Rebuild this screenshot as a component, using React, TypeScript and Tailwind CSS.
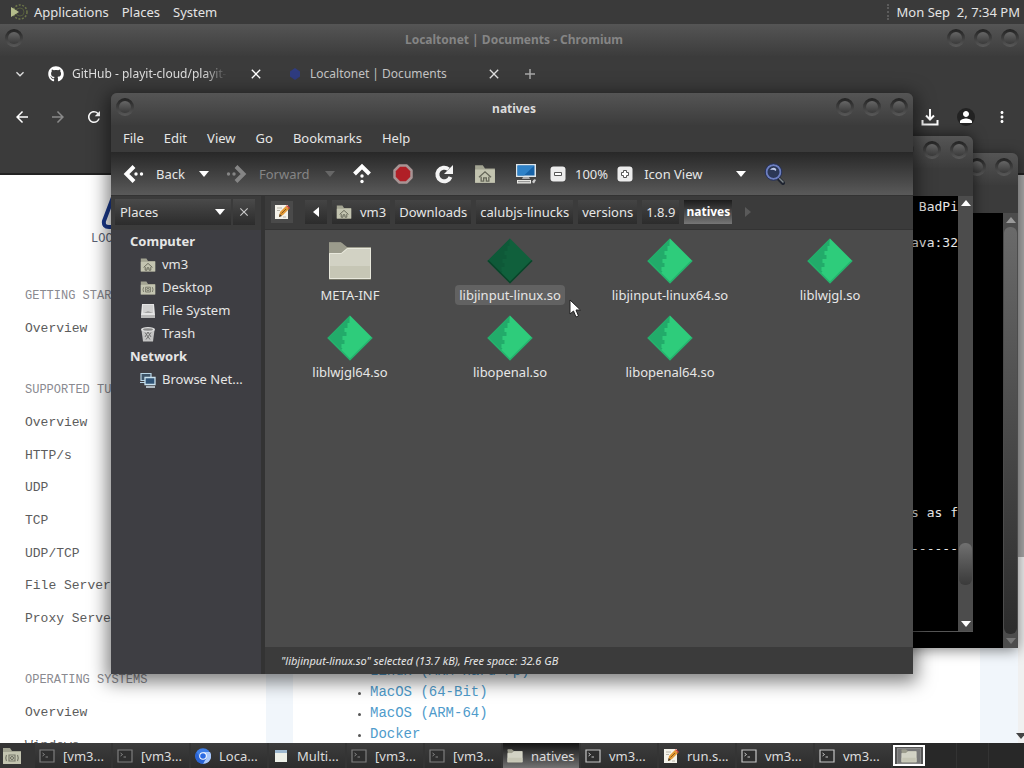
import { ReactNode } from "react";
import { clsx } from "clsx";
import { FaGithub } from "react-icons/fa";
import {
  MdArrowBack,
  MdArrowForward,
  MdClose,
  MdKeyboardArrowDown,
  MdMoreVert,
  MdPerson,
  MdRefresh,
} from "react-icons/md";

const Caret = ({ className }: { className?: string }) => (
  <svg viewBox="0 0 10 6" className={clsx("w-2.5 h-1.5 shrink-0", className)}>
    <path d="M0 0h10L5 6z" fill="currentColor" />
  </svg>
);

const HomeFolder = ({ className }: { className?: string }) => (
  <svg viewBox="0 0 20 20" className={clsx("shrink-0", className)}>
    <path d="M1 2h7l2 3h9v13H1z" fill="#a3a492" />
    <path d="M1 6h18v12H1z" fill="#c3c4b0" />
    <path
      d="M4.500 13l5.500-5 5.500 5M6.500 12.500v4h2.300v-3h2.400v3h2.300v-4"
      fill="none"
      stroke="#66675a"
      strokeWidth="1.200"
    />
  </svg>
);

const DesktopFolder = ({ className }: { className?: string }) => (
  <svg viewBox="0 0 20 20" className={clsx("shrink-0", className)}>
    <path d="M1 2h7l2 3h9v13H1z" fill="#a3a492" />
    <path d="M1 6h18v12H1z" fill="#c3c4b0" />
    <path
      d="M7 9h6v6H7zM4.500 9q-1.500 3 0 6M15.500 9q1.500 3 0 6"
      fill="none"
      stroke="#77786a"
      strokeWidth="1.200"
    />
    <circle cx="10" cy="12" r="1.500" fill="none" stroke="#66675a" />
  </svg>
);

const Drive = () => (
  <svg viewBox="0 0 16 16" className="size-4">
    <path d="M2 1h12l1 11v3H1v-3z" fill="#e4e4e4" />
    <path d="M3 2h10v8H3z" fill="#d0d0d0" />
    <path d="M4 10l4-2 5 2z" fill="#a5a5a5" />
    <path d="M1 12h14v3H1z" fill="#b9b9b9" />
  </svg>
);

const TrashCan = () => (
  <svg viewBox="0 0 16 16" className="size-4">
    <path d="M1.500 4h13l-1.500 11.500H3z" fill="#c4c4c4" />
    <path
      d="M5 6.500l5 7M8 6l3 5M11 6.500l-5 7M8 6l-3 5"
      stroke="#6a6a6a"
      strokeWidth=".9"
    />
    <ellipse cx="8" cy="3.500" rx="7" ry="2.500" fill="#dcdcdc" />
    <ellipse cx="8" cy="3.500" rx="5" ry="1.200" fill="#8b8b8b" />
  </svg>
);

const Network = () => (
  <svg viewBox="0 0 16 16" className="size-4">
    <path
      d="M1 1.500h10v7H1zM0 10.500h5"
      fill="#3d5468"
      stroke="#b8d4e4"
      strokeWidth="1.200"
    />
    <path d="M5 5.500h10v7H5z" fill="#2f5376" stroke="#c9e2ef" strokeWidth="1.300" />
    <path d="M6 15h9" stroke="#d4e3eb" strokeWidth="1.500" />
  </svg>
);

const Note = ({ className }: { className?: string }) => (
  <svg viewBox="0 0 16 16" className={clsx("shrink-0", className)}>
    <path d="M1 1h13v14H1z" fill="#f4f2ea" />
    <path d="M3 4h5M3 6.500h3M9 13h3" stroke="#b8b4a8" />
    <path d="M5 13l1-5 6-6 3 3-6 6z" fill="#e39a36" />
    <path d="M12 2l1-1 3 3-1 1z" fill="#d3463e" />
    <path d="M5 13l.7-3L8 12z" fill="#4a3b28" />
    <path d="M7.500 9.500l4.500-4.500" stroke="#8a5a1c" />
  </svg>
);

const Folder = ({ className }: { className?: string }) => (
  <svg viewBox="0 0 44 40" className={clsx("shrink-0", className)}>
    <path d="M1 1h12l4 5H1z" fill="#8f8f82" />
    <path d="M1 2h13l5 4h24v31H1z" fill="#9b9b8c" />
    <path d="M1 12h12l6-5h24v31H1z" fill="#d2d2c4" />
    <path d="M1 25h42v13H1z" fill="#c6c6b5" />
    <path d="M1.500 12.500h12l6-5h23v30h-41z" fill="none" stroke="#e8e8dc" />
    <path d="M1 38.500h42" stroke="#77776a" />
  </svg>
);

const Library = ({ dark }: { dark?: boolean }) => (
  <svg viewBox="0 0 48 48" className="size-12">
    <path
      d="M24 1.500L46.500 24 24 46.500 1.500 24z"
      fill={dark ? "#10603c" : "#2ecc7b"}
    />
    <path
      d="M24 1.500L1.500 24l13 13 2-3h-1v-4h3v-4h-2v-4h4v-4h-2v-4h3v-5h2V5z"
      fill={dark ? "#0e5938" : "#22ab6a"}
    />
    <path
      d="M24 46.500L46.500 24l-1-1L24 44.500 2.500 23l-1 1z"
      fill={dark ? "#0a4329" : "#25b26d"}
    />
  </svg>
);

const TerminalIcon = ({ dim }: { dim?: boolean }) => (
  <svg viewBox="0 0 16 14" className="w-4 h-3.5 shrink-0">
    <path
      d="M1 1h14v12H1z"
      fill="#2e2e2e"
      stroke={dim ? "#7e7e7e" : "#c4c4c4"}
      strokeWidth="1.200"
    />
    <path
      d="M3.500 4l2 1.500-2 1.500M6.500 8h2.500"
      fill="none"
      stroke={dim ? "#858585" : "#c4c4c4"}
    />
  </svg>
);

const ChromiumIcon = () => (
  <svg viewBox="0 0 16 16" className="size-4 shrink-0">
    <circle cx="8" cy="8" r="7.800" fill="#3f7fe8" />
    <path d="M8 4h7a7.800 7.800 0 0 1-7 11.800L11.500 10z" fill="#a9c8fb" />
    <path d="M1.500 4A7.800 7.800 0 0 0 8 15.800L11 10H5z" fill="#2a63d4" />
    <circle cx="8" cy="8" r="3.800" fill="#fff" />
    <circle cx="8" cy="8" r="2.800" fill="#2c6be2" />
  </svg>
);

const WindowIcon = () => (
  <svg viewBox="0 0 16 14" className="w-4 h-3.5 shrink-0">
    <path d="M2 1h12v12H2z" fill="#eef0e8" />
    <path d="M2 1h12v3H2z" fill="#9fb9d0" />
  </svg>
);

const RoundButton = ({ label }: { label: string }) => (
  <button
    aria-label={label}
    className="size-[18px] rounded-full bg-linear-to-b from-[#222] to-[#5a5a5a] flex items-center justify-center"
  >
    <span className="size-3 rounded-full bg-linear-to-b from-[#666] to-[#3a3a3a]" />
  </button>
);

const TitleBar = ({ title, dim }: { title?: string; dim?: boolean }) => (
  <div className="flex items-start justify-between h-8 px-[5px] pt-[5px] bg-linear-to-b from-[#555] to-[#3c3c3c] shrink-0">
    <RoundButton label="Window menu" />
    <h1
      className={clsx(
        "text-xs leading-[22px] font-bold pl-[58px]",
        dim ? "text-[#858585]" : "text-[#dcdcdc]"
      )}
    >
      {title}
    </h1>
    <div className="flex gap-[9px]">
      <RoundButton label="Minimize" />
      <RoundButton label="Maximize" />
      <RoundButton label="Close" />
    </div>
  </div>
);

const TopPanel = () => (
  <header className="h-6 shrink-0 flex items-center justify-between bg-[#3a3a3a] pl-2 pr-1 text-[#e4e4e4]">
    <nav className="flex items-center">
      <svg viewBox="0 0 20 20" className="size-5 mr-1.5">
        <circle
          cx="12"
          cy="10"
          r="7"
          fill="none"
          stroke="#6c7548"
          strokeWidth="1.500"
          strokeDasharray="2 1.500"
        />
        <circle cx="12" cy="10" r="4" fill="none" stroke="#545c3c" />
        <path d="M3 5l8 5-8 5z" fill="#b5bd8b" />
      </svg>
      <button className="mr-[13px]">Applications</button>
      <button className="mr-[13px]">Places</button>
      <button>System</button>
    </nav>
    <div className="flex items-center gap-2">
      <span className="h-4 border-l-2 border-dotted border-[#5c5c5c]" />
      <time className="whitespace-pre">Mon Sep  2, 7:34 PM</time>
    </div>
  </header>
);

const docSections = [
  { title: "GETTING STARTED", items: ["Overview"], height: "h-8" },
  {
    title: "SUPPORTED TUNNELS",
    items: [
      "Overview",
      "HTTP/s",
      "UDP",
      "TCP",
      "UDP/TCP",
      "File Server",
      "Proxy Server",
    ],
    height: "h-[228px]",
  },
  { title: "OPERATING SYSTEMS", items: ["Overview", "Windows"], height: "h-[65px]" },
];

const downloads = [
  "Linux (ARM Hard-Fp)",
  "MacOS (64-Bit)",
  "MacOS (ARM-64)",
  "Docker",
];

const Chromium = () => (
  <section className="absolute inset-0 flex flex-col bg-[#3b3b3b] overflow-hidden">
    <TitleBar title="Localtonet | Documents - Chromium" dim />
    <div className="flex items-center h-9 pl-3 shrink-0 text-xs text-[#dedede]">
      <button aria-label="Search tabs">
        <MdKeyboardArrowDown className="size-4" />
      </button>
      <a href="#github" className="flex items-center gap-2 w-[184px] ml-5">
        <FaGithub className="size-4 text-white shrink-0" />
        <span className="whitespace-nowrap overflow-hidden mask-r-from-85%">
          GitHub - playit-cloud/playit-
        </span>
      </a>
      <button aria-label="Close tab" className="ml-4">
        <MdClose className="size-4 text-white" />
      </button>
      <a href="#docs" className="flex items-center gap-2 w-[172px] ml-6 text-[#c4c4c4]">
        <svg viewBox="0 0 14 14" className="size-3.5">
          <path d="M7 1l5 3.500v5L7 13 2 9.500v-5z" fill="#2f3c80" />
        </svg>
        <span>Localtonet | Documents</span>
      </a>
      <button aria-label="Close tab" className="ml-[26px]">
        <MdClose className="size-4" />
      </button>
      <button aria-label="New tab" className="ml-5">
        <svg viewBox="0 0 16 16" className="size-4">
          <path d="M8 3v10M3 8h10" stroke="#a8a8a8" strokeWidth="1.500" />
        </svg>
      </button>
    </div>
    <div className="h-[83px] shrink-0 flex justify-between px-[13px] pt-4 border-b-2 border-[#222] text-white">
      <div className="flex gap-[18px] h-[18px]">
        <button aria-label="Back">
          <MdArrowBack className="size-[18px]" />
        </button>
        <button aria-label="Forward">
          <MdArrowForward className="size-[18px] text-[#8a8a8a]" />
        </button>
        <button aria-label="Reload">
          <MdRefresh className="size-[18px]" />
        </button>
      </div>
      <div className="flex gap-[18px] h-[18px]">
        <button aria-label="Downloads">
          <svg viewBox="0 0 18 18" className="size-[18px]">
            <path
              d="M9 1v10M5 7.500l4 4 4-4M1.500 12v4.500h15V12"
              fill="none"
              stroke="currentColor"
              strokeWidth="2"
            />
          </svg>
        </button>
        <button aria-label="Profile" className="bg-[#222] rounded-full">
          <MdPerson className="size-[18px]" />
        </button>
        <button aria-label="Menu">
          <MdMoreVert className="size-[18px]" />
        </button>
      </div>
    </div>

    <div className="flex-1 min-h-0 flex bg-white font-['Liberation_Mono',monospace] overflow-hidden">
      <nav className="w-[266px] shrink-0 pl-[25px] text-[13px] text-[#5c5c5c]">
        <div className="flex flex-col w-full h-[104px] pt-4 pl-[66px] text-xs text-[#5a5f73]">
          <svg viewBox="0 0 56 40" className="w-14 h-10 ml-2.5">
            <path
              d="M14 1L3 30q-1 6 5 6h40q6 0 4-6L42 1z"
              fill="none"
              stroke="#1b3a8f"
              strokeWidth="4"
            />
          </svg>
          LOCALTONET
        </div>
        {docSections.map((section) => (
          <div key={section.title} className="mb-7">
            <h2 className="text-xs leading-[34px] text-[#8a8a90]">{section.title}</h2>
            <ul className={clsx("flex flex-col", section.height)}>
              {section.items.map((item) => (
                <li key={item} className="flex-1 flex items-center">
                  <a href="#docs">{item}</a>
                </li>
              ))}
            </ul>
          </div>
        ))}
      </nav>
      <main className="flex-1 border-l-[27px] border-r-[38px] border-[#f1f6fb] pt-[486px] pl-[77px] text-sm leading-[21px] text-[#4f9bcb]">
        <ul className="list-disc marker:text-[#555] marker:text-[10px]">
          {downloads.map((item) => (
            <li key={item}>
              <a href="#download">{item}</a>
            </li>
          ))}
        </ul>
      </main>
      <div className="w-1.5 bg-[#f0f0f0] flex flex-col justify-between items-center pb-1">
        <span className="w-full h-[382px] bg-[#a8a8a8]" />
        <Caret className="text-[#444]" />
      </div>
    </div>
  </section>
);

const ScrollBar = ({ low }: { low?: boolean }) => (
  <div className="w-[15px] shrink-0 bg-[#4c4c4c] flex flex-col items-center py-1">
    <Caret className={clsx("rotate-180", low ? "text-white" : "text-[#9a9a9a]")} />
    <span
      className={clsx(
        "w-[13px] rounded-md bg-linear-to-b",
        low
          ? "mt-auto mb-9 h-[42px] from-[#707070] to-[#3a3a3a]"
          : "mt-1 flex-1 mb-1 from-[#6a6a6a] to-[#2c2c2c]"
      )}
    />
    <Caret className={low ? "text-white" : "text-[#777]"} />
  </div>
);

const BackTerminal = () => (
  <section className="absolute left-[300px] right-1.5 top-[129px] h-[495px] flex flex-col rounded-t-md overflow-hidden bg-[#3b3b3b] shadow-[0_2px_14px_rgba(0,0,0,0.5)]">
    <TitleBar />
    <div className="flex-1 mt-7 flex justify-end bg-black">
      <ScrollBar />
    </div>
  </section>
);

const FrontTerminal = () => (
  <section className="absolute left-[260px] right-[51px] top-28 h-[496px] flex flex-col rounded-t-md overflow-hidden bg-[#3b3b3b] border-b border-[#555] shadow-[0_0_14px_rgba(0,0,0,0.6)]">
    <TitleBar />
    <div className="flex-1 mt-7 flex bg-black text-[#e8e8e8] font-['DejaVu_Sans_Mono',monospace] text-[13px] leading-[18px]">
      <div className="flex-1 flex flex-col items-end pt-0.5 whitespace-pre">
        <p>java.lang.Error: BadPi</p>
        <p className="mt-[18px]">Main.java:32</p>
        <p className="mt-[252px]">is as f</p>
        <p className="mt-[18px]">---------------------</p>
      </div>
      <ScrollBar low />
    </div>
  </section>
);

const menuItems = ["File", "Edit", "View", "Go", "Bookmarks", "Help"];

const BackArrow = ({ className }: { className?: string }) => (
  <svg viewBox="0 0 22 22" className={clsx("size-[22px]", className)}>
    <path d="M11 3.500L3.500 11l7.500 7.500" fill="none" stroke="currentColor" strokeWidth="4" />
    <circle cx="13" cy="11" r="1.700" fill="currentColor" />
    <circle cx="18.500" cy="11" r="1.700" fill="currentColor" />
  </svg>
);

const ZoomButton = ({ label, d }: { label: string; d: string }) => (
  <button aria-label={label}>
    <svg viewBox="0 0 16 16" className="size-4">
      <rect x=".5" y=".5" width="15" height="15" rx="3" fill="#ececec" />
      <path d={d} fill="#fff" stroke="#555" />
    </svg>
  </button>
);

const ToolBar = () => (
  <div className="flex items-center h-11 pl-3 shrink-0 bg-linear-to-b from-[#282828] to-[#5a5a5a] border-b border-[#333]">
    <button className="flex items-center gap-[11px] w-[76px]">
      <BackArrow className="text-white" />
      Back
    </button>
    <button aria-label="Back history">
      <Caret className="text-white" />
    </button>
    <button disabled className="flex items-center gap-3 ml-4 w-[100px] text-[#858585]">
      <BackArrow className="rotate-180" />
      Forward
    </button>
    <button disabled aria-label="Forward history" className="text-[#666]">
      <Caret />
    </button>
    <div className="flex items-center gap-[19px] ml-4">
      <button aria-label="Open parent">
        <BackArrow className="rotate-90 text-white" />
      </button>
      <button aria-label="Stop">
        <svg viewBox="0 0 22 22" className="size-[22px]">
          <path
            d="M7.500 2.500h7l5 5v7l-5 5h-7l-5-5v-7z"
            fill="#b01f26"
            stroke="#a89494"
            strokeWidth="2.500"
            strokeLinejoin="round"
          />
        </svg>
      </button>
      <button aria-label="Reload">
        <svg viewBox="0 0 22 22" className="size-[22px]">
          <path
            d="M15.500 6.200A6.800 6.800 0 1 0 17.500 14"
            fill="none"
            stroke="#f4f4f4"
            strokeWidth="4"
          />
          <path d="M20 2v9h-9z" fill="#f4f4f4" />
        </svg>
      </button>
      <button aria-label="Home">
        <HomeFolder className="size-[22px]" />
      </button>
      <button aria-label="Computer">
        <svg viewBox="0 0 22 22" className="size-[22px]">
          <path d="M1 1h20v13H1z" fill="#dfe6ea" />
          <path d="M2.500 2.500h17v10h-17z" fill="#1763a8" />
          <path d="M2.500 2.500h17L9 12.500H2.500z" fill="#2f82c8" />
          <path d="M8 14h6l1 2H7z" fill="#aaa" />
          <path d="M2 17h14v3.500H2z" fill="#e8e8e4" />
          <path d="M3 18.700h12" stroke="#888" />
          <path d="M17 19q2-4 4-2l-2 3.500z" fill="#ccc" />
        </svg>
      </button>
    </div>
    <div className="flex items-center gap-[9px] ml-[13px]">
      <ZoomButton label="Zoom out" d="M4.500 6.500h7v3h-7z" />
      <span>100%</span>
      <ZoomButton
        label="Zoom in"
        d="M6.500 4.500h3v2h2v3h-2v2h-3v-2h-2v-3h2z"
      />
    </div>
    <div className="relative flex items-center ml-[11px] w-[102px]">
      <select aria-label="View mode" className="appearance-none w-full bg-transparent">
        <option>Icon View</option>
        <option>List View</option>
      </select>
      <Caret className="absolute right-0 text-white pointer-events-none" />
    </div>
    <button aria-label="Search" className="ml-[18px]">
      <svg viewBox="0 0 22 22" className="size-[22px]">
        <path d="M14 15l5 5" stroke="#1f2430" strokeWidth="4" strokeLinecap="round" />
        <path d="M14.500 14.500l5 5" stroke="#7d8588" strokeWidth="1.500" />
        <circle cx="9.500" cy="9" r="7" fill="#2c3856" stroke="#6d7fc0" strokeWidth="2" />
        <circle cx="9.500" cy="9" r="8.300" fill="none" stroke="#26325e" />
        <path d="M6 7q2-3 5-2 2 1 1 3-3-2-6-1z" fill="#bfc9e8" />
      </svg>
    </button>
  </div>
);

const places: { name: string; icon: ReactNode }[] = [
  { name: "vm3", icon: <HomeFolder className="size-4" /> },
  { name: "Desktop", icon: <DesktopFolder className="size-4" /> },
  { name: "File System", icon: <Drive /> },
  { name: "Trash", icon: <TrashCan /> },
];

const PlaceLink = ({ name, icon }: { name: string; icon: ReactNode }) => (
  <a href="#place" className="flex items-center gap-1.5 pl-[29px] whitespace-nowrap">
    {icon}
    {name}
  </a>
);

const SideBar = () => (
  <aside className="w-[154px] shrink-0 bg-[#3e3e43] border-r-4 border-[#333]">
    <div className="flex h-[34px] pt-[3px] pb-[5px] pl-1 pr-[6px] gap-0.5 bg-[#3b3b3b]">
      <div className="relative flex-1 flex items-center bg-linear-to-b from-[#4a4a4a] to-[#2c2c2c]">
        <select aria-label="Side pane" className="appearance-none w-full pl-[5px]">
          <option>Places</option>
          <option>Tree</option>
        </select>
        <Caret className="absolute right-1.5 text-white pointer-events-none" />
      </div>
      <button
        aria-label="Close side pane"
        className="flex items-center justify-center w-[22px] bg-linear-to-b from-[#4a4a4a] to-[#2c2c2c]"
      >
        <MdClose className="size-3.5 text-[#c8c8c8]" />
      </button>
    </div>
    <div className="leading-[23px]">
      <h2 className="font-bold pl-[19px]">Computer</h2>
      {places.map((place) => (
        <PlaceLink key={place.name} {...place} />
      ))}
      <h2 className="font-bold pl-[19px]">Network</h2>
      <PlaceLink name="Browse Net..." icon={<Network />} />
    </div>
  </aside>
);

const crumbs = ["Downloads", "calubjs-linucks", "versions", "1.8.9"];

const LocationBar = () => (
  <div className="flex items-center gap-[5px] h-[34px] pb-0.5 pl-1.5 shrink-0 bg-[#3b3b3b] border-b border-[#333] whitespace-nowrap">
    <button
      aria-label="Edit location"
      className="flex items-center justify-center size-[22px] mr-[7px] bg-[#4a4a4a]"
    >
      <Note className="size-4" />
    </button>
    <button
      aria-label="Scroll left"
      className="flex items-center justify-center w-[22px] h-6 bg-linear-to-b from-[#444] to-[#2c2c2c]"
    >
      <Caret className="rotate-90 text-white" />
    </button>
    <button className="flex items-center gap-2 h-6 px-1 bg-linear-to-b from-[#444] to-[#2c2c2c]">
      <HomeFolder className="size-4" />
      vm3
    </button>
    {crumbs.map((crumb) => (
      <button
        key={crumb}
        className="h-6 px-1 bg-linear-to-b from-[#444] to-[#2c2c2c]"
      >
        {crumb}
      </button>
    ))}
    <button className="h-6 px-0.5 text-xs font-bold text-white bg-linear-to-b from-[#1c1c1c] to-[#777]">
      natives
    </button>
    <button aria-label="Scroll right" disabled className="ml-1.5">
      <Caret className="-rotate-90 text-[#5a5a5a]" />
    </button>
  </div>
);

const files = [
  { name: "META-INF", folder: true },
  { name: "libjinput-linux.so", selected: true },
  { name: "libjinput-linux64.so" },
  { name: "liblwjgl.so" },
  { name: "liblwjgl64.so" },
  { name: "libopenal.so" },
  { name: "libopenal64.so" },
];

const FileManager = () => (
  <section className="absolute inset-x-[111px] top-[69px] h-[581px] flex flex-col rounded-t-md overflow-hidden bg-[#3b3b3b] text-[#e6e6e6]">
    <TitleBar title="natives" />
    <nav className="flex gap-5 h-[27px] pb-0.5 pl-3 items-center shrink-0">
      {menuItems.map((item) => (
        <button key={item}>{item}</button>
      ))}
    </nav>
    <ToolBar />
    <div className="flex-1 flex min-h-0">
      <SideBar />
      <div className="flex-1 flex flex-col min-w-0">
        <LocationBar />
        <div className="flex-1 bg-[#4b4b4b] grid grid-cols-[repeat(auto-fill,160px)] auto-rows-[77px] content-start pl-[5px] pt-[7px]">
          {files.map((file) => (
            <button key={file.name} className="flex flex-col items-center">
              {file.folder ? (
                <span className="flex items-center h-12">
                  <Folder className="w-11 h-10" />
                </span>
              ) : (
                <Library dark={file.selected} />
              )}
              <span
                className={clsx(
                  "px-1 leading-5 rounded-sm",
                  file.selected && "bg-[#626262]"
                )}
              >
                {file.name}
              </span>
            </button>
          ))}
        </div>
        <p className="h-[27px] shrink-0 pl-4 text-[11px] leading-[27px] italic">
          "libjinput-linux.so" selected (13.7 kB), Free space: 32.6 GB
        </p>
      </div>
    </div>
  </section>
);

const tasks: { name: string; icon: ReactNode; active?: boolean }[] = [
  { name: "[vm3...", icon: <TerminalIcon dim /> },
  { name: "[vm3...", icon: <TerminalIcon dim /> },
  { name: "Loca...", icon: <ChromiumIcon /> },
  { name: "Multi...", icon: <WindowIcon /> },
  { name: "[vm3...", icon: <TerminalIcon dim /> },
  { name: "[vm3...", icon: <TerminalIcon dim /> },
  { name: "natives", icon: <Folder className="w-4 h-3.5" />, active: true },
  { name: "vm3...", icon: <TerminalIcon /> },
  { name: "run.s...", icon: <Note className="size-4" /> },
  { name: "vm3...", icon: <TerminalIcon /> },
  { name: "vm3...", icon: <TerminalIcon /> },
];

const TaskBar = () => (
  <footer className="h-[25px] shrink-0 flex bg-[#343434] text-[#dcdcdc]">
    <button aria-label="Show desktop" className="w-[35px] pl-0.5">
      <DesktopFolder className="size-5" />
    </button>
    {tasks.map((task, i) => (
      <button
        key={i}
        className={clsx(
          "flex items-center gap-2 w-[76px] mr-0.5 pl-1 whitespace-nowrap",
          task.active
            ? "bg-linear-to-b from-[#161616] to-[#737373]"
            : "bg-linear-to-b from-[#3c3c3c] to-[#2d2d2d]"
        )}
      >
        {task.icon}
        {task.name}
      </button>
    ))}
    <div className="flex-1 flex bg-[#282828] divide-x divide-[#333]">
      <button
        aria-label="Workspace 1"
        className="w-8 my-0.5 border-2 border-white bg-[#555] flex items-center justify-center"
      >
        <span className="flex items-center justify-center w-6 h-4 border border-[#888] bg-[#777]">
          <Folder className="w-4 h-3.5" />
        </span>
      </button>
      <button aria-label="Workspace 2" className="w-8" />
      <button aria-label="Workspace 3" className="w-8" />
      <button aria-label="Workspace 4" className="w-8" />
    </div>
  </footer>
);

const App = () => (
  <div className="h-screen flex flex-col overflow-hidden font-['Noto_Sans',sans-serif] text-[13px] leading-5">
    <TopPanel />
    <div className="relative flex-1 min-h-0 overflow-hidden">
      <Chromium />
      <BackTerminal />
      <FrontTerminal />
      <div className="absolute inset-x-[111px] top-[69px] h-[581px] rounded-t-md shadow-[0_4px_18px_4px_rgba(0,0,0,0.5)]" />
      <FileManager />
      <svg viewBox="0 0 12 19" className="absolute left-[569px] top-[275px] w-3 h-[19px]">
        <path
          d="M1 1v14l3.500-3 2.500 6 2.500-1L7 11h4.500z"
          fill="#fff"
          stroke="#222"
        />
      </svg>
    </div>
    <TaskBar />
  </div>
);

export default App;
